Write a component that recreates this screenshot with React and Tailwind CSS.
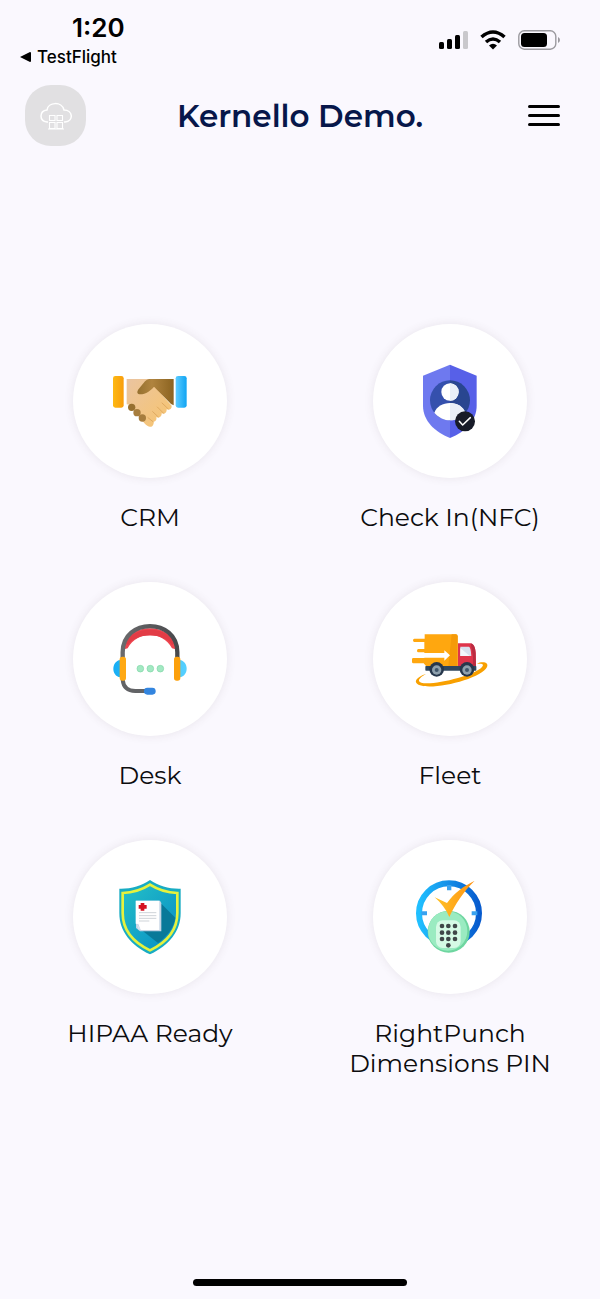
import { useId } from "react";

function HandshakeIcon() {
  const id = useId();
  return (
    <svg viewBox="120 121 300 300" className="size-[100px]" aria-hidden="true">
      <defs>
        <linearGradient id={`${id}-cuff`}>
          <stop offset="0" stopColor="#fdb913" />
          <stop offset="1" stopColor="#f99d0b" />
        </linearGradient>
        <linearGradient id={`${id}-blue`}>
          <stop offset="0" stopColor="#5cccff" />
          <stop offset="1" stopColor="#10a4f3" />
        </linearGradient>
        <linearGradient id={`${id}-skin`} x1="0" y1="0" x2="1" y2="1">
          <stop offset="0" stopColor="#eac4a0" />
          <stop offset="1" stopColor="#f8c56e" />
        </linearGradient>
        <linearGradient id={`${id}-brown`}>
          <stop offset="0" stopColor="#95702f" />
          <stop offset="0.4" stopColor="#b0843f" />
          <stop offset="1" stopColor="#8b6320" />
        </linearGradient>
      </defs>
      <rect x="159" y="196" width="32" height="95" rx="7" fill={`url(#${id}-cuff)`} />
      <rect x="347" y="196" width="33" height="95" rx="7" fill={`url(#${id}-blue)`} />
      <path
        d="M200 205h65l17 20 53 60c1 9-7 14-15 11 1 10-7 16-15 12 1 10-8 16-16 11 2 9-2 13-8 14 1 9-4 16-11 15-9 0-18-13-23-18l-38-48-9-1z"
        fill={`url(#${id}-skin)`}
      />
      <path
        d="M267 205h74v79l-8-4-51-52c-10 12-25 24-44 23-8-2-7-9-2-16l19-23q6-6 12-7z"
        fill={`url(#${id}-brown)`}
      />
      <path
        d="M264 321l15 12M278 303l17 16M292 289l19 19M306 277l19 18"
        stroke="#dba35a"
        strokeWidth="2.5"
        strokeLinecap="round"
        fill="none"
      />
      <circle cx="215" cy="290" r="11" fill="#97702f" />
      <circle cx="231" cy="306" r="11" fill="#a77d3d" />
      <circle cx="247" cy="322" r="11" fill="#a77d3d" />
    </svg>
  );
}

function CheckInIcon() {
  return (
    <svg viewBox="120 121 300 300" className="size-[100px]" aria-hidden="true">
      <path d="M270 162l-81 33v90c0 45 35 78 81 97z" fill="#6e79ef" />
      <path d="M270 162l80 33v90c0 45-34 78-80 97z" fill="#5760e8" />
      <path d="M270 209a60 60 0 0 0 0 120z" fill="#3550ad" />
      <path d="M270 209a60 60 0 0 1 0 120z" fill="#294690" />
      <circle cx="270" cy="244" r="26" fill="#fff" />
      <path d="M223 306c7-18 25-29 47-29s39 11 46 29c-12 15-29 23-46 23s-35-8-47-23z" fill="#fff" />
      <path d="M270 218a26 26 0 0 1 0 52zM270 277c22 0 39 11 46 29-12 15-29 23-46 23z" fill="#e9eff8" />
      <circle cx="315" cy="332" r="30" fill="#171b28" />
      <path d="M298 332l10 11 23-22" fill="none" stroke="#fff" strokeWidth="4.5" strokeLinecap="round" strokeLinejoin="round" />
    </svg>
  );
}

function HeadsetIcon() {
  const id = useId();
  return (
    <svg viewBox="0 -5 300 300" className="size-[100px]" aria-hidden="true">
      <defs>
        <linearGradient id={`${id}-ear`}>
          <stop offset="0" stopColor="#17aef5" />
          <stop offset="1" stopColor="#56d0ff" />
        </linearGradient>
        <linearGradient id={`${id}-band`}>
          <stop offset="0" stopColor="#6a6a6c" />
          <stop offset="1" stopColor="#48494c" />
        </linearGradient>
      </defs>
      <path d="M73 116c-2-84 152-84 154 0l-11-3c-31-54-102-54-133 0z" fill="#ef4650" />
      <path d="M76 98c20-54 128-54 148 0l-8 5c-24-38-108-38-132 0z" fill="#e23c46" />
      <path
        d="M68 144v-19c0-105 164-105 164 0v19"
        fill="none"
        stroke={`url(#${id}-band)`}
        strokeWidth="13"
      />
      <path d="M68 207c2 22 15 34 38 34h32" fill="none" stroke="#626366" strokeWidth="12" />
      <path d="M61 148c-28 3-28 49 0 52zM239 148c28 3 28 49 0 52z" fill={`url(#${id}-ear)`} />
      <rect x="59" y="138" width="19" height="72" rx="8" fill="#ffa914" />
      <rect x="222" y="138" width="19" height="72" rx="8" fill="#fca00c" />
      <rect x="132" y="231" width="35" height="21" rx="10" fill="#3385df" />
      <g fill="#a3e9c3" stroke="#82d6a8" strokeWidth="2">
        <circle cx="121" cy="174" r="10" />
        <circle cx="151" cy="174" r="10" />
        <circle cx="181" cy="174" r="10" />
      </g>
    </svg>
  );
}

function TruckIcon() {
  return (
    <svg viewBox="0 -5 300 300" className="size-[100px]" aria-hidden="true">
      <path
        d="M78 190c-22 12-27 22-14 26 32 10 160-21 182-47 7-9 0-12-15-9l6-4c18-4 29 1 24 13-15 34-155 70-201 55-25-10-8-26 18-34z"
        fill="#f8a000"
      />
      <path
        d="M74 71h93q6 0 6 6v89H78l-7-8H40q-4 0-4-5v-7q0-4 4-4h33v-17H55q-4 0-4-5t4-5h18V94H43q-4 0-4-5t4-5h31z"
        fill="#ffa70f"
      />
      <path d="M155 71h12q6 0 6 6v89h-28z" fill="#f59a08" />
      <path d="M50 127h83v-8l17 15-17 16v-9H50z" fill="#fff" />
      <path d="M174 98h36c12 0 16 14 17 29l1 42h-54z" fill="#df344b" />
      <path d="M212 98c10 2 14 15 15 29l1 42h-9v-32z" fill="#b92c42" />
      <path d="M181 108h26q5 1 7 28h-33z" fill="#d9e0ee" />
      <path d="M181 112l28 24h-28z" fill="#f3f6fb" />
      <rect x="76" y="166" width="153" height="14" rx="2" fill="#30475e" />
      <circle cx="110" cy="176" r="22" fill="#26374c" />
      <circle cx="110" cy="178" r="14" fill="#8ea0ad" />
      <circle cx="110" cy="178" r="6" fill="#40566b" />
      <circle cx="201" cy="176" r="22" fill="#26374c" />
      <circle cx="201" cy="178" r="14" fill="#8ea0ad" />
      <circle cx="201" cy="178" r="6" fill="#40566b" />
    </svg>
  );
}

function HipaaIcon() {
  const id = useId();
  return (
    <svg viewBox="0 5 300 300" className="size-[100px]" aria-hidden="true">
      <defs>
        <linearGradient id={`${id}-shield`} x1="0" y1="0" x2="1" y2="1">
          <stop offset="0" stopColor="#24c1c8" />
          <stop offset="1" stopColor="#078bc4" />
        </linearGradient>
      </defs>
      <path d="M150 44c26 18 58 27 92 26v73c0 55-35 98-92 124-57-26-92-69-92-124V70c34 1 66-8 92-26z" fill="#18acc3" />
      <path
        d="M150 58c25 16 52 24 82 25v60c0 50-32 88-82 112-50-24-82-62-82-112V83c30-1 57-9 82-25z"
        fill={`url(#${id}-shield)`}
        stroke="#e6f23d"
        strokeWidth="8"
      />
      <path d="M184 115l42 42c-5 29-23 55-52 76l-56-44z" fill="#087999" />
      <path d="M108 106h72l4 7v85h-64l-12-10z" fill="#c5d4e5" />
      <path d="M107 106h71v88h-56l-7-18-8-1z" fill="#fff" />
      <path d="M111 176l12 18-8-2z" fill="#dbe4ef" />
      <path d="M122 113h11v6h7v11h-7v6h-11v-6h-6v-11h6z" fill="#d51220" />
      <path d="M117 142h52M117 151h52M117 159h52M117 167h31" stroke="#c4cad0" strokeWidth="2.5" />
    </svg>
  );
}

function PunchClockIcon() {
  const id = useId();
  return (
    <svg viewBox="0 5 300 300" className="size-[100px]" aria-hidden="true">
      <defs>
        <linearGradient id={`${id}-clock`}>
          <stop offset="0" stopColor="#20bfff" />
          <stop offset="1" stopColor="#075bce" />
        </linearGradient>
        <linearGradient id={`${id}-tick`}>
          <stop offset="0" stopColor="#ffc226" />
          <stop offset="1" stopColor="#ff9212" />
        </linearGradient>
      </defs>
      <circle cx="147" cy="144" r="90" fill="#fff" stroke={`url(#${id}-clock)`} strokeWidth="18" />
      <path d="M141 59h13v16h-13zM64 138h17v12H64zM215 138h17v12h-17z" fill="#39a2ef" />
      <circle cx="146" cy="199" r="63" fill="#6ed6a0" />
      <circle cx="143" cy="197" r="59" fill="#9aebc1" />
      <rect x="108" y="165" width="74" height="83" rx="20" fill="#d5fae5" />
      <g fill="#404648">
        <circle cx="126" cy="182" r="7" />
        <circle cx="145" cy="182" r="7" />
        <circle cx="165" cy="182" r="7" />
        <circle cx="126" cy="202" r="7" />
        <circle cx="145" cy="202" r="7" />
        <circle cx="165" cy="202" r="7" />
        <circle cx="126" cy="221" r="7" />
        <circle cx="145" cy="221" r="7" />
        <circle cx="165" cy="221" r="7" />
        <circle cx="145" cy="240" r="7" />
      </g>
      <path d="M104 96l37 17c22-31 49-50 83-67-34 33-58 70-76 109-10-23-25-43-44-59z" fill={`url(#${id}-tick)`} />
    </svg>
  );
}

const apps = [
  { name: "CRM", icon: HandshakeIcon },
  { name: "Check In(NFC)", icon: CheckInIcon },
  { name: "Desk", icon: HeadsetIcon },
  { name: "Fleet", icon: TruckIcon },
  { name: "HIPAA Ready", icon: HipaaIcon },
  { name: "RightPunch Dimensions PIN", icon: PunchClockIcon },
];

function StatusBar() {
  return (
    <div className="flex items-start justify-between pl-5 pr-10 pt-3 font-[Inter,sans-serif] text-black">
      <div>
        <p className="pl-[52px] text-[26px] font-semibold leading-8">1:20</p>
        <a href="#testflight" className="flex items-center gap-[6px] text-[17px] font-medium leading-[26px]">
          <svg viewBox="0 0 11 10" className="h-[10px] w-[11px]" aria-hidden="true">
            <path d="M0 5L10 0q1 0 1 1v8q0 1-1 1z" />
          </svg>
          TestFlight
        </a>
      </div>
      <div className="flex items-center gap-3 pt-[18px]">
        <svg viewBox="0 0 30 20" className="h-5 w-[30px]" aria-label="Signal">
          <rect x="1" y="12" width="5" height="7" rx="1.5" />
          <rect x="9" y="9" width="5" height="10" rx="1.5" />
          <rect x="17" y="5" width="5" height="14" rx="1.5" />
          <rect x="25" y="1" width="5" height="18" rx="1.5" fill="#c9c8cc" />
        </svg>
        <svg viewBox="0 0 26 20" className="h-5 w-[26px]" aria-label="Wi-Fi">
          <path d="M1.5 7Q13-3 24.5 7M6 12Q13 6 20 12" fill="none" stroke="#000" strokeWidth="3.6" />
          <path d="M9 15.5q4-3.4 8 0l-4 4z" />
        </svg>
        <svg viewBox="0 0 42 20" className="h-5 w-[42px]" aria-label="Battery">
          <rect x="0.8" y="0.8" width="37" height="18.4" rx="5.5" fill="none" stroke="#9b9a9f" strokeWidth="1.4" />
          <rect x="3" y="3" width="26" height="14" rx="3.5" />
          <path d="M40 7q2 1 2 3t-2 3z" fill="#9b9a9f" />
        </svg>
      </div>
    </div>
  );
}

function Header() {
  return (
    <header className="grid grid-cols-[1fr_auto_1fr] items-center px-[25px] pt-[15px]">
      <a
        href="#home"
        aria-label="Home"
        className="flex size-[61px] items-center justify-center rounded-[26px] bg-[#e1e0e2]"
      >
        <svg viewBox="0 0 32 28" className="h-7 w-8" fill="none" stroke="#fff" aria-hidden="true">
          <path d="M8 20H7c-8-1-8-11 0-12C8 0 22-1 24 8c9 0 10 11 1 12h-1" strokeWidth="1.5" />
          <path d="M9.5 13.500h5.500v5h-5.500zM17 13.500h5.500v5H17zM9.500 20.500h5.500v6h-5.500zM17 20.500h5.500v6H17zM8 27h16" strokeWidth="1.1" />
        </svg>
      </a>
      <h1 className="text-[31px] font-semibold leading-10 text-[#07174a]">Kernello Demo.</h1>
      <button
        type="button"
        aria-label="Open menu"
        className="mr-[15px] flex w-8 cursor-pointer flex-col gap-[6px] justify-self-end"
      >
        <span className="h-[3px] w-full rounded-full bg-black" />
        <span className="h-[3px] w-full rounded-full bg-black" />
        <span className="h-[3px] w-full rounded-full bg-black" />
      </button>
    </header>
  );
}

export default function App() {
  return (
    <div className="flex min-h-screen flex-col bg-[#faf8fe] font-[Montserrat,Inter,sans-serif]">
      <StatusBar />
      <Header />

      <main className="grid flex-1 grid-cols-2 content-start gap-y-[50px] pb-16 pt-[178px]">
        {apps.map(({ name, icon: Icon }) => (
          <button
            key={name}
            type="button"
            className="flex cursor-pointer flex-col items-center justify-self-center"
          >
            <span className="flex size-[154px] items-center justify-center rounded-full bg-white shadow-[0_0_10px_rgba(80,60,70,0.1)]">
              <Icon />
            </span>
            <span className="mt-6 max-w-[230px] text-[25px] leading-[30px] text-[#0c0c0e]">
              {name}
            </span>
          </button>
        ))}
      </main>

      <footer className="flex justify-center pb-[13px]">
        <div className="h-[7px] w-[214px] rounded-full bg-black" />
      </footer>
    </div>
  );
}
